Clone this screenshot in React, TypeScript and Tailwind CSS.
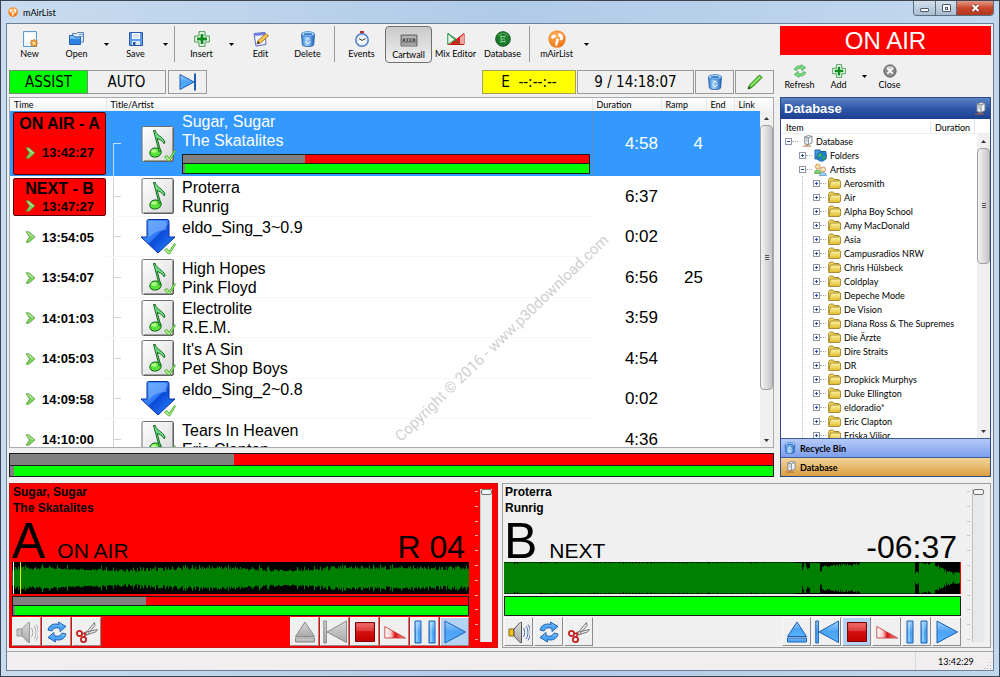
import type { ReactNode } from "react";
import clsx from "clsx";

/* ---------- shared gradients ---------- */

function Gradients() {
  return (
    <svg className="absolute h-0 w-0" aria-hidden="true">
      <defs>
        <linearGradient id="blue" x1="0" y1="0" x2="0" y2="1">
          <stop offset="0" stopColor="#9fd0ff" />
          <stop offset="0.5" stopColor="#4aa3f5" />
          <stop offset="1" stopColor="#57b2ff" />
        </linearGradient>
        <linearGradient id="gray" x1="0" y1="0" x2="0" y2="1">
          <stop offset="0" stopColor="#d9d9d9" />
          <stop offset="1" stopColor="#a9a9a9" />
        </linearGradient>
        <linearGradient id="plate" x1="0" y1="0" x2="1" y2="1">
          <stop offset="0" stopColor="#ffffff" />
          <stop offset="1" stopColor="#d8d8d8" />
        </linearGradient>
        <linearGradient id="arrow" x1="0" y1="0" x2="1" y2="1">
          <stop offset="0" stopColor="#4fa0ff" />
          <stop offset="0.45" stopColor="#2f7af5" />
          <stop offset="0.5" stopColor="#0b4ad8" />
          <stop offset="1" stopColor="#2a8cff" />
        </linearGradient>
        <linearGradient id="stop" x1="0" y1="0" x2="0" y2="1">
          <stop offset="0" stopColor="#ee5a5a" />
          <stop offset="0.5" stopColor="#d60f0f" />
          <stop offset="1" stopColor="#c00000" />
        </linearGradient>
        <linearGradient id="fade" x1="0" y1="0" x2="1" y2="0">
          <stop offset="0" stopColor="#ffffff" />
          <stop offset="0.3" stopColor="#f6caca" />
          <stop offset="0.5" stopColor="#e01010" />
          <stop offset="1" stopColor="#f4b0b0" />
        </linearGradient>
        <linearGradient id="folder" x1="0" y1="0" x2="0" y2="1">
          <stop offset="0" stopColor="#fff6a8" />
          <stop offset="1" stopColor="#e0b92c" />
        </linearGradient>
        <radialGradient id="orange" cx="0.4" cy="0.3" r="0.8">
          <stop offset="0" stopColor="#ffb35c" />
          <stop offset="1" stopColor="#ee6a0a" />
        </radialGradient>
        <linearGradient id="bin" x1="0" y1="0" x2="1" y2="0">
          <stop offset="0" stopColor="#2f79cf" />
          <stop offset="0.4" stopColor="#a8d4ff" />
          <stop offset="1" stopColor="#1f62b8" />
        </linearGradient>
      </defs>
    </svg>
  );
}

/* ---------- icons ---------- */

function Icon({ size = "h-4 w-4", box = "0 0 16 16", children }: { size?: string; box?: string; children: ReactNode }) {
  return (
    <svg viewBox={box} className={clsx("shrink-0", size)} fill="none" aria-hidden="true">
      {children}
    </svg>
  );
}

const NewIcon = () => (
  <Icon>
    <path d="M1.5.5h13v15h-13z" fill="#eaf6ff" stroke="#5d9bd0" />
    <path d="M3 2h10v6L3 12z" fill="#fff" />
    <path d="M12 8l1 2 2-.6-.7 2 1.7 1-1.8 1 .6 2-2-.5L12 16l-1-1.500-2 .5.6-2-1.600-1 1.700-1-.7-2 2 .6z" fill="#f6a742" stroke="#b5691a" strokeWidth=".6" />
    <circle cx="12" cy="12.200" r="1.300" fill="#ffe6a0" />
  </Icon>
);

const OpenIcon = () => (
  <Icon>
    <path d="M3.500 6V2.500h4l1-1h6V11h-3" fill="#d9ebfb" stroke="#5a7fb0" />
    <path d="M10 3.500h4M10 5.500h4" stroke="#7ba6d8" />
    <path d="M.5 4.500h4l1 1.500h6v7.500H.5z" fill="url(#blue)" stroke="#1d5fb4" />
    <path d="M1 8h10.500v5H1z" fill="#2f83e0" />
  </Icon>
);

const SaveIcon = () => (
  <Icon>
    <path d="M1.500 1.500h13v13h-13z" fill="#5c9cee" stroke="#2859a8" />
    <path d="M4 2h8v6H4z" fill="#fff" />
    <path d="M5 4h6M5 6h6" stroke="#b9cbe6" />
    <path d="M4 10h8v4H4z" fill="#dfe7f2" />
    <path d="M5 11h2.500v3H5z" fill="#2859a8" />
  </Icon>
);

const PlusIcon = ({ size }: { size?: string }) => (
  <Icon size={size}>
    <path d="M5 .7h6V5h4.300v6H11v4.300H5V11H.7V5H5z" fill="#f4fff4" stroke="#2f8a3c" strokeWidth=".9" strokeLinejoin="round" />
    <path d="M6.600 3h2.800v3.600H13v2.800H9.400V13H6.600V9.400H3V6.600h3.600z" fill="#0f8f22" />
  </Icon>
);

const EditIcon = () => (
  <Icon>
    <path d="M1 2.500l11-1 1 12-10 1.500z" fill="#f2f6ff" stroke="#5a66c8" />
    <path d="M1 2.500l11-1 .2 2.500-11 1z" fill="#6f7fe0" />
    <path d="M4 13l1-3.500L13 2.500 15.500 5 7.500 12z" fill="#f8c54a" stroke="#94601a" strokeWidth=".8" />
    <path d="M4 13l1-3 2 2z" fill="#333" />
  </Icon>
);

const BinIcon = ({ size }: { size?: string }) => (
  <Icon size={size}>
    <path d="M1.500 3l.8 11c1 2 10.400 2 11.400 0l.8-11z" fill="url(#bin)" stroke="#1f5ca8" strokeWidth=".8" />
    <ellipse cx="8" cy="3" rx="6.500" ry="2.300" fill="#d7ebff" stroke="#3d86d0" />
    <ellipse cx="8" cy="3.200" rx="4.500" ry="1.200" fill="#3a80cc" />
    <path d="M6 9l2-2 2 2M10.500 10l-1.500 2.500H7L5.500 10" stroke="#e8f4ff" />
  </Icon>
);

const ClockIcon = () => (
  <Icon>
    <path d="M6 0h4v2.500H6z" fill="#c02a2a" />
    <circle cx="8" cy="9" r="6.200" fill="#f4f9ff" stroke="#4f7fd0" strokeWidth="1.500" />
    <path d="M5 7.500L8 9.500l3.500-2" stroke="#333" />
    <path d="M8 4.500v1M8 12.500v1M3.500 9h1M11.500 9h1" stroke="#8fa8cc" />
  </Icon>
);

const CartIcon = () => (
  <Icon size="h-4 w-[18px]" box="0 0 18 16">
    <path d="M1 3h16v11H1z" fill="#8f8f8f" stroke="#6d6d6d" />
    <path d="M2 4h14v3H2z" fill="#b5b5b5" />
    <path d="M3 6.500h12v3H3z" fill="#4c4c4c" />
    <path d="M5 8h2M8 8h2M11 8h2" stroke="#eee" />
    <path d="M2 11.500h14v2H2z" fill="#a9a9a9" />
  </Icon>
);

const MixIcon = () => (
  <Icon size="h-4 w-[18px]" box="0 0 18 16">
    <path d="M17 2.500v11H3z" fill="#e21b1b" stroke="#c01010" />
    <path d="M17 3v10h-4V6.500z" fill="#f3a5a5" />
    <path d="M.8 2.500v11L9 8z" fill="#f3fff3" stroke="#1c8a3c" />
    <path d="M1 2.500l12 11" stroke="#1c8a3c" />
    <path d="M.8 13.500h3" stroke="#c33" />
  </Icon>
);

const DatabaseIcon = () => (
  <Icon>
    <circle cx="8" cy="8" r="7.300" fill="#1d7a2c" stroke="#125a1d" />
    <path d="M6 4v8M6 5.500h4M6 8h4M6 10.500h4M10 4.500v2M10 9.500v2" stroke="#7fd08a" />
    <path d="M3 5a6 6 0 0 1 10 0" stroke="#5db56b" />
  </Icon>
);

const LogoIcon = ({ size = "h-[18px] w-[18px]" }: { size?: string }) => (
  <Icon size={size}>
    <circle cx="8" cy="8" r="7.700" fill="url(#orange)" />
    <path d="M2.500 6.500C3 4 6 3.500 7.500 5c-1 2-3 2-3.500 3zM9 3c2.500-.5 4.500 1.500 4.500 4S11 9.500 10 8.500c1.500-1 .5-2.500-.5-2.500zM7.500 7l2 1.500c.5 2-1.500 3-1 5.500H6.500c-.5-2.500 1-4 1-7z" fill="#fff" />
  </Icon>
);

const RefreshIcon = ({ green, size }: { green?: boolean; size?: string }) => {
  const fill = green ? "#7ddc84" : "url(#blue)";
  const line = green ? "#2f9a3c" : "#1c5fb0";
  return (
    <Icon size={size} box="0 0 20 22">
      <path d="M1 9C2 4 7 2 12 3.500L11.500 1 19 5.500 13 10.500V7.500C9 6 6 7 5 10z" fill={fill} stroke={line} strokeLinejoin="round" />
      <path d="M19 13c-1 5-6 7-11 5.500l.5 2.500L1 16.500 7 11.500v3c4 1.500 7 .5 8-2.500z" fill={fill} stroke={line} strokeLinejoin="round" />
    </Icon>
  );
};

const CloseIcon = () => (
  <Icon size="h-[14px] w-[14px]">
    <circle cx="8" cy="8" r="7" fill="#8b8b8b" stroke="#4f4f4f" />
    <path d="M3 5a6 6 0 0 1 10 0L8 8z" fill="#c9c9c9" />
    <path d="M5 5l6 6M11 5l-6 6" stroke="#fff" strokeWidth="2.200" />
  </Icon>
);

const SkipIcon = () => (
  <Icon size="h-[18px] w-[18px]" box="0 0 18 18">
    <path d="M1 1.500L15 9 1 16.500z" fill="url(#blue)" stroke="#1c5fb0" />
    <path d="M16 .5v17" stroke="#1c5fb0" strokeWidth="2" />
  </Icon>
);

const PencilIcon = () => (
  <Icon size="h-4 w-4">
    <path d="M1 15l1.500-4L12.500 1l2.500 2.500L5 13.500z" fill="#5fd435" stroke="#2b7d18" />
    <path d="M4 11.500l9-8.500" stroke="#c5f5ae" />
    <path d="M1 15l1-2.500 1.500 1.500z" fill="#333" />
  </Icon>
);

const ServerIcon = ({ size = "h-3 w-3" }: { size?: string }) => (
  <Icon size={size} box="0 0 13 13">
    <path d="M4 2l4-1.500 4 1v7L8 10.500l-4-1z" fill="#f2f4f6" stroke="#7d8790" />
    <path d="M4 2l4 1v7.500M8 3l4-1.500" stroke="#7d8790" />
    <path d="M5 4l2 .5M5 6l2 .5" stroke="#98a4b0" />
    <path d="M2 12h9M6.500 10v2" stroke="#b5653a" />
  </Icon>
);

const GlobeFolderIcon = () => (
  <Icon size="h-[13px] w-[13px]" box="0 0 13 13">
    <path d="M1 1h5l1 1.500h5V10H1z" fill="#4b9be8" stroke="#1f5fb0" />
    <circle cx="7.500" cy="7.500" r="4.800" fill="#1f7fd0" stroke="#15558f" strokeWidth=".6" />
    <path d="M4.500 5c2-2 4 0 3 1.500S4.500 8 5 10M9 8c1-1 2.500 0 2 1.500L9 11z" fill="#42c05a" stroke="#238a3a" strokeWidth=".6" />
  </Icon>
);

const PeopleIcon = () => (
  <Icon size="h-[13px] w-[13px]" box="0 0 13 13">
    <path d="M.7 9.500C.7 6 6.500 6 6.500 9.500v1H.7z" fill="#7fd070" stroke="#3f9a3a" strokeWidth=".7" />
    <circle cx="3.800" cy="3.600" r="2.500" fill="#f6d9a0" stroke="#c08a3a" strokeWidth=".7" />
    <path d="M5.500 12.500c0-4 7-4 7 0z" fill="#9fd0f6" stroke="#4a8fcb" strokeWidth=".7" />
    <circle cx="9" cy="6.500" r="2.500" fill="#fbe3c0" stroke="#c0753a" strokeWidth=".7" />
  </Icon>
);

const FolderIcon = () => (
  <Icon size="h-3 w-[13px]" box="0 0 13 12">
    <path d="M.6 10.500V2.500L2 1h3l1 1.500h5V4" fill="#f3d65a" stroke="#96791a" strokeWidth=".8" />
    <path d="M2.500 4h10v6.500l-1.500 1H.7z" fill="url(#folder)" stroke="#96791a" strokeWidth=".8" />
  </Icon>
);

const Chevron = () => (
  <Icon size="h-3 w-[11px]" box="0 0 11 12">
    <path d="M1 .8h3L10 6l-6 5.200H1L4.500 6z" fill="#7fcf5c" stroke="#4a9a35" strokeWidth=".7" />
    <path d="M2.500 1.500L8 6" stroke="#d0f0b8" />
  </Icon>
);

const Check = () => (
  <path d="M24.500 32l2.500-1.500 2 3 5.500-8 1 .8-6 9.700h-1z" fill="#b9f58f" stroke="#3fae2a" strokeWidth=".9" strokeLinejoin="round" />
);

const NoteIcon = ({ checked }: { checked: boolean }) => (
  <Icon size="h-[38px] w-9" box="0 0 36 38">
    <rect x="2" y="1.500" width="31.500" height="35" rx="1.500" fill="url(#plate)" stroke="#6f6f6f" />
    <path d="M33 3v33H4" stroke="#555" />
    <ellipse cx="15.500" cy="27.500" rx="5.800" ry="4.500" fill="#5be23a" stroke="#146b1c" transform="rotate(-12 15.5 27.5)" />
    <ellipse cx="14" cy="26" rx="2.800" ry="1.700" fill="#b6ff8f" />
    <path d="M13.500 5.500h1.800c1 5 7.500 6 9.700 11.500l-.8 1.800c-2-3.500-5-4.500-7-5.500l3.500 13-1.400.5z" fill="#6fdc8a" stroke="#146b1c" />
    {checked && <Check />}
  </Icon>
);

const DownIcon = () => (
  <Icon size="h-[38px] w-9" box="0 0 36 38">
    <path d="M8.500 1.500h18.500q2 0 2 2v15.500h6L18 35 1 19h6V3q0-1.500 1.500-1.500z" fill="url(#arrow)" stroke="#0a2fa8" strokeLinejoin="round" />
    <path d="M8.500 3h18v9c-8 0-14 3-18 8z" fill="#8fc0ff" opacity=".5" />
    <Check />
  </Icon>
);

/* transport icons, all on a 22x22 grid */

type Transport = { dim?: boolean };
const tint = (dim?: boolean) => (dim ? { fill: "url(#gray)", stroke: "#8a8a8a" } : { fill: "url(#blue)", stroke: "#1c5fb0" });
const big = "h-[22px] w-[22px]";

const SpeakerIcon = ({ dim }: Transport) => (
  <Icon size={big} box="0 0 22 22">
    <path d="M1 8h5v7H1z" fill={dim ? "#c4c4c4" : "#f0c020"} stroke={dim ? "#999" : "#8a6a10"} />
    <path d="M6 8l6-6.500h1.500v20H12L6 15z" fill="url(#gray)" stroke={dim ? "#999" : "#555"} />
    <path d="M15.500 7c1.500 2 1.500 7 0 9M18 5c2.500 3 2.500 10 0 13M20 3.500c3 4 3 12 0 16" stroke={dim ? "#aaa" : "#4f70b8"} />
  </Icon>
);

const ScissorsIcon = () => (
  <Icon size={big} box="0 0 22 22">
    <path d="M9 13L18.500 1.500l.5 3L11 14zM8 11.500l13.500-3-2 2.500-9.500 3z" fill="#eee" stroke="#777" strokeLinejoin="round" />
    <circle cx="3.500" cy="12.500" r="2.600" stroke="#c62020" strokeWidth="1.800" />
    <circle cx="7.500" cy="18.500" r="2.600" stroke="#c62020" strokeWidth="1.800" />
    <path d="M6 12.500h3.500L8.500 16" stroke="#c62020" strokeWidth="1.500" />
  </Icon>
);

const EjectIcon = ({ dim }: Transport) => (
  <Icon size={big} box="0 0 22 22">
    <path d="M11 1l9.500 14.500h-19z" {...tint(dim)} />
    <path d="M1.500 17h19v4h-19z" {...tint(dim)} />
  </Icon>
);

const PrevIcon = ({ dim }: Transport) => (
  <Icon size="h-[24px] w-[24px]" box="0 0 24 24">
    <path d="M.8 1h2.600v22H.8z" {...tint(dim)} />
    <path d="M23.500 1v21.500L4 12z" {...tint(dim)} />
  </Icon>
);

const StopIcon = () => (
  <Icon size={big} box="0 0 22 22">
    <path d="M1.500 1.500h19v19h-19z" fill="url(#stop)" stroke="#7d0000" />
    <path d="M2.500 10h17V2.500h-17z" fill="#fff" opacity=".15" />
  </Icon>
);

const FadeIcon = () => (
  <Icon size={big} box="0 0 22 22">
    <path d="M.8 5.500L21.500 17H.8z" fill="url(#fade)" stroke="#c03030" strokeWidth=".8" />
  </Icon>
);

const PauseIcon = () => (
  <Icon size="h-[24px] w-[22px]" box="0 0 22 24">
    <path d="M1 1h6v22H1zM15 1h6v22h-6z" {...tint()} />
    <path d="M3 2v20M17 2v20" stroke="#c8e6ff" />
  </Icon>
);

const PlayIcon = () => (
  <Icon size="h-[24px] w-[22px]" box="0 0 22 24">
    <path d="M1 1l20.500 11L1 23z" {...tint()} />
  </Icon>
);

/* ---------- data ---------- */

type Track = {
  time: string;
  title: string;
  artist?: string;
  duration: string;
  ramp?: string;
  state?: string;
  current?: boolean;
  unchecked?: boolean;
};

const tracks: Track[] = [
  { time: "13:42:27", title: "Sugar, Sugar", artist: "The Skatalites", duration: "4:58", ramp: "4", state: "ON AIR - A", current: true },
  { time: "13:47:27", title: "Proterra", artist: "Runrig", duration: "6:37", state: "NEXT - B", unchecked: true },
  { time: "13:54:05", title: "eldo_Sing_3~0.9", duration: "0:02" },
  { time: "13:54:07", title: "High Hopes", artist: "Pink Floyd", duration: "6:56", ramp: "25" },
  { time: "14:01:03", title: "Electrolite", artist: "R.E.M.", duration: "3:59" },
  { time: "14:05:03", title: "It's A Sin", artist: "Pet Shop Boys", duration: "4:54" },
  { time: "14:09:58", title: "eldo_Sing_2~0.8", duration: "0:02" },
  { time: "14:10:00", title: "Tears In Heaven", artist: "Eric Clapton", duration: "4:36" },
];

const artists = [
  "Aerosmith", "Air", "Alpha Boy School", "Amy MacDonald", "Asia", "Campusradios NRW", "Chris Hülsbeck",
  "Coldplay", "Depeche Mode", "De Vision", "Diana Ross & The Supremes", "Die Ärzte", "Dire Straits", "DR",
  "Dropkick Murphys", "Duke Ellington", "eldoradio*", "Eric Clapton", "Eriska Vilior",
];

/* ---------- small parts ---------- */

function ToolButton({ icon, label, active, slim }: { icon: ReactNode; label: string; active?: boolean; slim?: boolean }) {
  return (
    <button
      className={clsx(
        "flex flex-col items-center gap-px whitespace-nowrap",
        slim ? "w-[39px]" : "h-[37px] w-[47px] pt-[5px]",
        active && "rounded-sm border border-[#6f6f6f] bg-linear-to-b from-[#c9c9c9] to-[#f2f2f2] pt-1"
      )}
    >
      <span className={clsx("flex items-center justify-center", slim ? "h-[14px]" : "h-4")}>{icon}</span>
      <span className="leading-[11px]">{label}</span>
    </button>
  );
}

function MenuArrow({ label }: { label: string }) {
  return (
    <button aria-label={label} className="flex w-3 items-center justify-center">
      <svg viewBox="0 0 5 3" className="h-[3px] w-[5px]">
        <path d="M0 0h5L2.500 3z" fill="#000" />
      </svg>
    </button>
  );
}

const Separator = () => <div className="mx-[3px] h-9 w-px bg-[#9a9a9a]" />;

function Progress({ played, tall }: { played: string; tall?: boolean }) {
  return (
    <div className="flex w-full flex-col border border-[#1c1c1c] bg-[#1c1c1c]">
      <div className={clsx("bg-[#ff0000]", tall ? "h-[11px]" : "h-2")}>
        <div className="h-full bg-[#808080]" style={{ width: played }} />
      </div>
      <div className={clsx("mt-px border-[#808080] bg-[#00ff00]", tall ? "h-[10px] border-l-4" : "h-[9px] border-l-2")} />
    </div>
  );
}

function ScrollBar({ thumb }: { thumb: string }) {
  return (
    <div className="flex w-[13px] shrink-0 flex-col items-center bg-[#f0f0f0]">
      <div className="flex h-[14px] items-center">
        <svg viewBox="0 0 5 3" className="h-[3px] w-[5px]"><path d="M0 3h5L2.500 0z" fill="#333" /></svg>
      </div>
      <div className="flex w-full min-h-0 flex-1 flex-col">
        <div className={clsx("flex flex-col items-center justify-center gap-px rounded-sm border border-[#a0a0a0] bg-linear-to-r from-[#f4f4f4] to-[#c4c4c8]", thumb)}>
          <span className="h-px w-1 bg-[#555]" />
          <span className="h-px w-1 bg-[#555]" />
          <span className="h-px w-1 bg-[#555]" />
        </div>
      </div>
      <div className="flex h-[14px] items-center">
        <svg viewBox="0 0 5 3" className="h-[3px] w-[5px]"><path d="M0 0h5L2.500 3z" fill="#333" /></svg>
      </div>
    </div>
  );
}

/* ---------- playlist ---------- */

function TimeCell({ track }: { track: Track }) {
  return (
    <div
      className={clsx(
        "ml-[3px] flex h-full flex-col items-center font-bold",
        track.state ? "rounded-[2px] border border-[#5a0000] bg-[#ff0000]" : "justify-center",
        track.current && "gap-[11px] pt-[2px]",
        track.state && !track.current && "pt-px"
      )}
    >
      {track.state && <div className="text-[16px] leading-[18px]">{track.state}</div>}
      <div className="flex items-center gap-[6px] text-[13px] leading-[17px]">
        <Chevron />
        {track.time}
      </div>
    </div>
  );
}

function TrackRow({ track, first }: { track: Track; first: boolean }) {
  const line = track.current ? "border-[#c4dcf4]" : "border-[#d0d0d0]";
  return (
    <tr className={clsx(track.current ? "h-[65px] bg-[#3399ff] text-white" : "even:h-[41px] odd:h-10")}>
      <td className="p-0 text-black">
        <div className={clsx(track.current ? "h-[65px]" : "h-10", "py-px")}>
          <TimeCell track={track} />
        </div>
      </td>
      <td className="p-0">
        <div className={clsx("flex items-center", track.current ? "h-[65px]" : "h-10 border-b border-[#f6f6f6]")}>
          <div className="ml-[7px] flex w-2 shrink-0 flex-col self-stretch">
            <div className={clsx("flex-1 border-b", line, !first && "border-l")} />
            <div className={clsx("flex-1 border-l", line)} />
          </div>
          <div className="ml-[19px] shrink-0">
            {track.artist ? <NoteIcon checked={!track.unchecked} /> : <DownIcon />}
          </div>
          <div className="ml-[6px] min-w-0 flex-1 self-stretch pt-px pr-[2px] text-[16px] leading-[19px]">
            <div>{track.title}</div>
            {track.artist && <div>{track.artist}</div>}
            {track.current && (
              <div className="mt-1">
                <Progress played="30%" />
              </div>
            )}
          </div>
        </div>
      </td>
      <td className={clsx("p-0 pr-[3px] text-right align-middle text-[17px] leading-5", track.current && "border-l border-[#5a8fc4]")}>{track.duration}</td>
      <td className="p-0 pr-[3px] text-right align-middle text-[17px] leading-5">{track.ramp}</td>
      <td />
      <td />
    </tr>
  );
}

function Playlist() {
  return (
    <section className="relative mt-[3px] flex min-h-0 flex-1 basis-0 overflow-hidden border border-[#a5a9b0] bg-white">
      <div className="min-w-0 flex-1">
        <table className="w-full table-fixed border-collapse font-['Liberation_Sans',Arial,sans-serif]">
          <colgroup>
            <col className="w-24" />
            <col />
            <col className="w-[69px]" />
            <col className="w-[45px]" />
            <col className="w-7" />
            <col className="w-[26px]" />
          </colgroup>
          <thead>
            <tr className="h-[13px] bg-linear-to-b from-white to-[#f1f2f4] text-left font-[Lato,sans-serif] text-[9px] leading-[13px]">
              <th className="p-0 pl-1 font-normal">Time</th>
              <th className="border-l border-[#e4e6ea] p-0 pl-1 font-normal">Title/Artist</th>
              <th className="border-l border-[#e4e6ea] p-0 pl-1 font-normal">Duration</th>
              <th className="border-l border-[#e4e6ea] p-0 pl-1 font-normal">Ramp</th>
              <th className="border-l border-[#e4e6ea] p-0 pl-1 font-normal">End</th>
              <th className="border-l border-[#e4e6ea] p-0 pl-1 font-normal">Link</th>
            </tr>
          </thead>
          <tbody>
            {tracks.map((track, i) => (
              <TrackRow key={track.time} track={track} first={i === 0} />
            ))}
          </tbody>
        </table>
      </div>
      <div className="flex flex-col">
        <div className="h-[13px] bg-linear-to-b from-white to-[#f1f2f4]" />
        <div className="flex min-h-0 flex-1">
          <ScrollBar thumb="h-[86%]" />
        </div>
      </div>
      <div className="pointer-events-none absolute inset-0 flex items-center justify-center pt-[130px] pl-[220px]">
        <span className="-rotate-[44deg] whitespace-nowrap font-[Roboto,sans-serif] text-[15px] leading-4 text-[#cfcfcf]">
          Copyright © 2016 - www.p30download.com
        </span>
      </div>
    </section>
  );
}

/* ---------- database sidebar ---------- */

function TreeItem({ label, icon, open, indent }: { label: string; icon: ReactNode; open?: boolean; indent: string }) {
  return (
    <li className={clsx("flex h-[14px] items-center whitespace-nowrap", indent)}>
      <button aria-label={open ? "Collapse" : "Expand"} className="flex h-[7px] w-[7px] items-center justify-center border border-[#8c96a8] bg-white">
        <svg viewBox="0 0 5 5" className="h-[5px] w-[5px]">
          <path d={open ? "M1 2.500h3" : "M1 2.500h3M2.500 1v3"} stroke="#2b4c9c" />
        </svg>
      </button>
      <span className="mr-[2px] w-[6px] border-t border-dotted border-[#b0b0b0]" />
      <span className="flex w-[13px] justify-center">{icon}</span>
      <span className="ml-[3px]">{label}</span>
    </li>
  );
}

function Sidebar() {
  return (
    <aside className="flex w-[211px] shrink-0 flex-col">
      <div className="mt-[2px] flex h-[29px] items-center justify-center bg-[#ff0000] font-['Liberation_Sans',Arial,sans-serif] text-[24px] text-white">
        ON AIR
      </div>
      <div className="mt-[9px] flex h-[33px]">
        <ToolButton slim icon={<RefreshIcon green size="h-[14px] w-[14px]" />} label="Refresh" />
        <ToolButton slim icon={<PlusIcon size="h-[14px] w-[14px]" />} label="Add" />
        <div className="flex h-6"><MenuArrow label="Add options" /></div>
        <ToolButton slim icon={<CloseIcon />} label="Close" />
      </div>
      <div className="flex min-h-0 flex-1 flex-col border border-[#2b4c8c] bg-white">
        <div className="flex h-[21px] shrink-0 items-center justify-between bg-linear-to-b from-[#5d82c4] via-[#2e57a8] to-[#1d3f90] pr-1 pl-[3px]">
          <h2 className="font-['Liberation_Sans',Arial,sans-serif] text-[13px] font-bold text-white">Database</h2>
          <ServerIcon size="h-[13px] w-[13px]" />
        </div>
        <div className="flex h-[15px] shrink-0 items-end border-b border-[#eceef2] pl-[5px]">
          <span className="flex-1">Item</span>
          <span className="w-11 border-l border-[#e0e3e8] pl-1">Duration</span>
          <span className="h-full w-4 border-l border-[#e0e3e8]" />
        </div>
        <div className="flex min-h-0 flex-1 basis-0">
          <ul className="min-w-0 flex-1 overflow-hidden">
            <TreeItem indent="pl-1" open icon={<ServerIcon />} label="Database" />
            <TreeItem indent="pl-[18px]" icon={<GlobeFolderIcon />} label="Folders" />
            <TreeItem indent="pl-[18px]" open icon={<PeopleIcon />} label="Artists" />
            <li className="ml-[21px] border-l border-dotted border-[#c0c0c0]">
              <ul>
                {artists.map((name) => (
                  <TreeItem key={name} indent="pl-[10px]" icon={<FolderIcon />} label={name} />
                ))}
              </ul>
            </li>
          </ul>
          <ScrollBar thumb="h-[42%]" />
        </div>
        <button className="flex h-[19px] shrink-0 items-center gap-1 border-t border-[#3c5a9c] bg-linear-to-b from-[#b4caf8] to-[#7f9fee] pl-[3px] font-bold">
          <BinIcon size="h-3 w-3" />
          Recycle Bin
        </button>
        <button className="flex h-[19px] shrink-0 items-center gap-1 border-t border-[#3c5a9c] bg-linear-to-b from-[#f2d49a] to-[#dba03c] pl-[3px] font-bold">
          <ServerIcon />
          Database
        </button>
      </div>
    </aside>
  );
}

/* ---------- players ---------- */

const noise = (i: number) => {
  const v = Math.sin(i * 12.9898) * 43758.5453;
  return v - Math.floor(v);
};

const levelA = (i: number) => 7.5 + 1.2 * Math.sin(i / 25) + (i > 380 ? 1.5 : 0) + noise(i) * noise(i + 7) * 6;

const levelB = (i: number) => {
  if (i < 292) return 16 - noise(i) * noise(i + 3) * 2;
  if (i < 320) return noise(i >> 1) > 0.5 ? 15 : 6 + noise(i) * 6;
  if (i < 356) return 9 + (i - 320) / 12 + noise(i) * 4;
  if (i < 411) return 16;
  if (i < 415) return 4 + noise(i) * 3;
  if (i < 429) return 13 + noise(i) * 3;
  return Math.max(3, 13 - (i - 429) / 1.5) + noise(i) * 4;
};

function Waveform({ level, cue }: { level: (i: number) => number; cue?: boolean }) {
  let d = "";
  for (let i = 0; i < 457; i++) {
    const h = Math.min(15.5, level(i));
    d += `M${i + 0.5} ${16 - h}V${16 + h}`;
  }
  return (
    <svg viewBox="0 0 457 32" preserveAspectRatio="none" className="block h-8 w-full bg-black" aria-hidden="true">
      <path d={d} stroke="#008000" strokeWidth="1.200" />
      {cue ? (
        <>
          <path d="M1.500 0v32" stroke="#fff" />
          <path d="M8.500 0v32" stroke="#e8e800" />
        </>
      ) : (
        <path d="M456.500 0v32" stroke="#f00" />
      )}
    </svg>
  );
}

function PlayerButton({ label, on, children }: { label: string; on?: boolean; children: ReactNode }) {
  return (
    <button aria-label={label} className={clsx("flex h-[29px] w-[29px] items-center justify-center border border-r-[#8c8c8c] border-b-[#8c8c8c] border-t-[#fafafa] border-l-[#fafafa]", on ? "bg-[#b4d2f4]" : "bg-[#f0f0f0]")}>
      {children}
    </button>
  );
}

type PlayerProps = {
  name: string;
  title: string;
  artist: string;
  status: string;
  clock: string;
  live?: boolean;
};

function Player({ name, title, artist, status, clock, live }: PlayerProps) {
  return (
    <section className={clsx("flex h-[165px] border font-['Liberation_Sans',Arial,sans-serif]", live ? "border-[#d01010] bg-[#ff0000] pl-[2px]" : "border-[#a0a0a0] bg-[#f0f0f0] pl-px")}>
      <div className="min-w-0 flex-1">
        <div className="pl-px text-[12px] leading-4 font-bold">
          <div>{title}</div>
          <div>{artist}</div>
        </div>
        <div className="flex h-[46px] items-baseline pr-1">
          <span className="text-[50px] leading-[50px]">{name}</span>
          <span className="ml-3 text-[21px]">{status}</span>
          <span className="ml-auto text-[32px] leading-9">{clock}</span>
        </div>
        <Waveform level={live ? levelA : levelB} cue={live} />
        <div className="mt-[2px]">
          {live ? <Progress played="29.3%" /> : <div className="h-5 border border-[#1c1c1c] bg-[#00ff00]" />}
        </div>
        <div className="mt-px flex gap-px">
          <PlayerButton label="Monitor"><SpeakerIcon dim={live} /></PlayerButton>
          <PlayerButton label="Loop"><RefreshIcon size={big} /></PlayerButton>
          <PlayerButton label="Cut"><ScissorsIcon /></PlayerButton>
          <span className="flex-1" />
          <PlayerButton label="Eject"><EjectIcon dim={live} /></PlayerButton>
          <PlayerButton label="Previous"><PrevIcon dim={live} /></PlayerButton>
          <PlayerButton label="Stop" on={!live}><StopIcon /></PlayerButton>
          <PlayerButton label="Fade out"><FadeIcon /></PlayerButton>
          <PlayerButton label="Pause"><PauseIcon /></PlayerButton>
          <PlayerButton label="Play" on={live}><PlayIcon /></PlayerButton>
        </div>
      </div>
      <div className="my-[7px] ml-[6px] flex w-[3px] flex-col justify-between">
        {Array.from({ length: 11 }, (_, i) => (
          <span key={i} className={clsx("h-px", live ? "bg-[#ffb0b0]" : "bg-[#c8c8c8]")} />
        ))}
      </div>
      <div className={clsx("my-[5px] ml-[2px] flex w-3 border-l", live ? "mr-[5px] border-[#c8c8c8] bg-[#e8ecec]" : "mr-[6px] border-[#c0c0c0] bg-[#e7eaea]")}>
        <input
          type="range"
          aria-label={`Player ${name} volume`}
          min={0}
          max={100}
          defaultValue={0}
          className="h-full w-full appearance-none bg-transparent [writing-mode:vertical-lr] [&::-webkit-slider-thumb]:h-[6px] [&::-webkit-slider-thumb]:w-[11px] [&::-webkit-slider-thumb]:appearance-none [&::-webkit-slider-thumb]:rounded-[2px] [&::-webkit-slider-thumb]:border [&::-webkit-slider-thumb]:border-[#707070] [&::-webkit-slider-thumb]:bg-[#f4f4f4]"
        />
      </div>
    </section>
  );
}

/* ---------- window ---------- */

function TitleBar() {
  return (
    <header className="flex h-[22px] shrink-0 items-center pl-[2px]">
      <LogoIcon size="h-[10px] w-[10px]" />
      <h1 className="ml-[5px] flex-1">mAirList</h1>
      <div className="flex h-[15px] self-start overflow-hidden rounded-b border border-t-0 border-[#5a6c80] text-white">
        <button aria-label="Minimize" className="flex w-[22px] items-end justify-center border-r border-[#5a6c80] bg-linear-to-b from-[#d4e0ec] to-[#a8bccf] pb-[3px]">
          <span className="h-1 w-[9px] rounded-[1px] border border-[#4a5a6c] bg-white" />
        </button>
        <button aria-label="Maximize" className="flex w-[21px] items-center justify-center border-r border-[#5a6c80] bg-linear-to-b from-[#d4e0ec] to-[#a8bccf]">
          <span className="flex h-[8px] w-[9px] items-center justify-center rounded-[1px] border border-[#4a5a6c] bg-white">
            <span className="h-[3px] w-[3px] border border-[#4a5a6c]" />
          </span>
        </button>
        <button aria-label="Close window" className="flex w-[36px] items-center justify-center bg-linear-to-b from-[#e09a88] via-[#c8452c] to-[#b03820]">
          <svg viewBox="0 0 9 8" className="h-2 w-[9px]">
            <path d="M1.500 1l6 6M7.500 1l-6 6" stroke="#5a2018" strokeWidth="3" />
            <path d="M1.500 1l6 6M7.500 1l-6 6" stroke="#fff" strokeWidth="2" />
          </svg>
        </button>
      </div>
    </header>
  );
}

function Toolbar() {
  return (
    <div className="mt-[2px] -ml-[3px] flex h-[37px] shrink-0 items-stretch">
      <ToolButton icon={<NewIcon />} label="New" />
      <ToolButton icon={<OpenIcon />} label="Open" />
      <MenuArrow label="Open recent" />
      <ToolButton icon={<SaveIcon />} label="Save" />
      <MenuArrow label="Save options" />
      <Separator />
      <ToolButton icon={<PlusIcon />} label="Insert" />
      <MenuArrow label="Insert options" />
      <ToolButton icon={<EditIcon />} label="Edit" />
      <ToolButton icon={<BinIcon />} label="Delete" />
      <Separator />
      <ToolButton icon={<ClockIcon />} label="Events" />
      <ToolButton active icon={<CartIcon />} label="Cartwall" />
      <ToolButton icon={<MixIcon />} label="Mix Editor" />
      <ToolButton icon={<DatabaseIcon />} label="Database" />
      <Separator />
      <ToolButton icon={<LogoIcon />} label="mAirList" />
      <MenuArrow label="mAirList menu" />
    </div>
  );
}

function ModeBar() {
  return (
    <div className="mt-[7px] flex h-6 shrink-0 font-['DejaVu_Sans_Condensed','Noto_Sans',sans-serif] text-[15px]">
      <button className="w-[79px] border border-[#6d8f6d] bg-[#00ff00]">ASSIST</button>
      <button className="w-[78px] border border-l-0 border-[#9a9a9a]">AUTO</button>
      <button aria-label="Play next" className="ml-[2px] flex w-[39px] items-center justify-center border border-[#9a9a9a]">
        <SkipIcon />
      </button>
      <span className="flex-1" />
      <div className="flex w-[94px] items-center justify-center border border-[#a0a060] bg-[#ffff00] whitespace-pre">E  --:--:--</div>
      <div className="ml-px flex w-[117px] items-center justify-center border border-[#9a9a9a]">9 / 14:18:07</div>
      <button aria-label="Recycle bin" className="ml-px flex w-[39px] items-center justify-center border border-[#9a9a9a]"><BinIcon /></button>
      <button aria-label="Edit playlist" className="ml-px flex w-[39px] items-center justify-center border border-[#9a9a9a]"><PencilIcon /></button>
    </div>
  );
}

function StatusBar() {
  return (
    <footer className="mt-[3px] flex h-[19px] shrink-0 justify-end border-t border-[#a8a8a8] bg-[#f0eeee]">
      <div className="flex w-[78px] items-center justify-between border-l border-[#d8d8d8] pl-[22px]">
        <span>13:42:29</span>
        <svg viewBox="0 0 9 9" className="h-[9px] w-[9px] self-end" aria-hidden="true">
          <path d="M6 1h1v1H6zM6 4h1v1H6zM6 7h1v1H6zM3 4h1v1H3zM3 7h1v1H3zM0 7h1v1H0z" fill="#b0b0b0" />
        </svg>
      </div>
    </footer>
  );
}

export default function App() {
  return (
    <div className="flex h-screen w-full flex-col border border-[#3c4450] bg-linear-to-r from-[#c9dcef] via-[#b0cbe8] to-[#c2d8ee] px-[5px] pb-[5px] font-[Lato,sans-serif] text-[9px] leading-[11px] text-black">
      <Gradients />
      <TitleBar />
      <main className="flex min-h-0 flex-1 flex-col border border-[#6c7f95] bg-[#f0f0f0]">
        <div className="flex min-h-0 flex-1 gap-[6px] px-[2px]">
          <div className="flex min-w-0 flex-1 flex-col">
            <Toolbar />
            <ModeBar />
            <Playlist />
            <div className="mt-[5px] flex shrink-0">
              <Progress played="29.4%" tall />
            </div>
          </div>
          <Sidebar />
        </div>
        <div className="mt-[6px] grid shrink-0 grid-cols-2 gap-1 px-[2px]">
          <Player name="A" title="Sugar, Sugar" artist="The Skatalites" status="ON AIR" clock="R 04" live />
          <Player name="B" title="Proterra" artist="Runrig" status="NEXT" clock="-06:37" />
        </div>
        <StatusBar />
      </main>
    </div>
  );
}
